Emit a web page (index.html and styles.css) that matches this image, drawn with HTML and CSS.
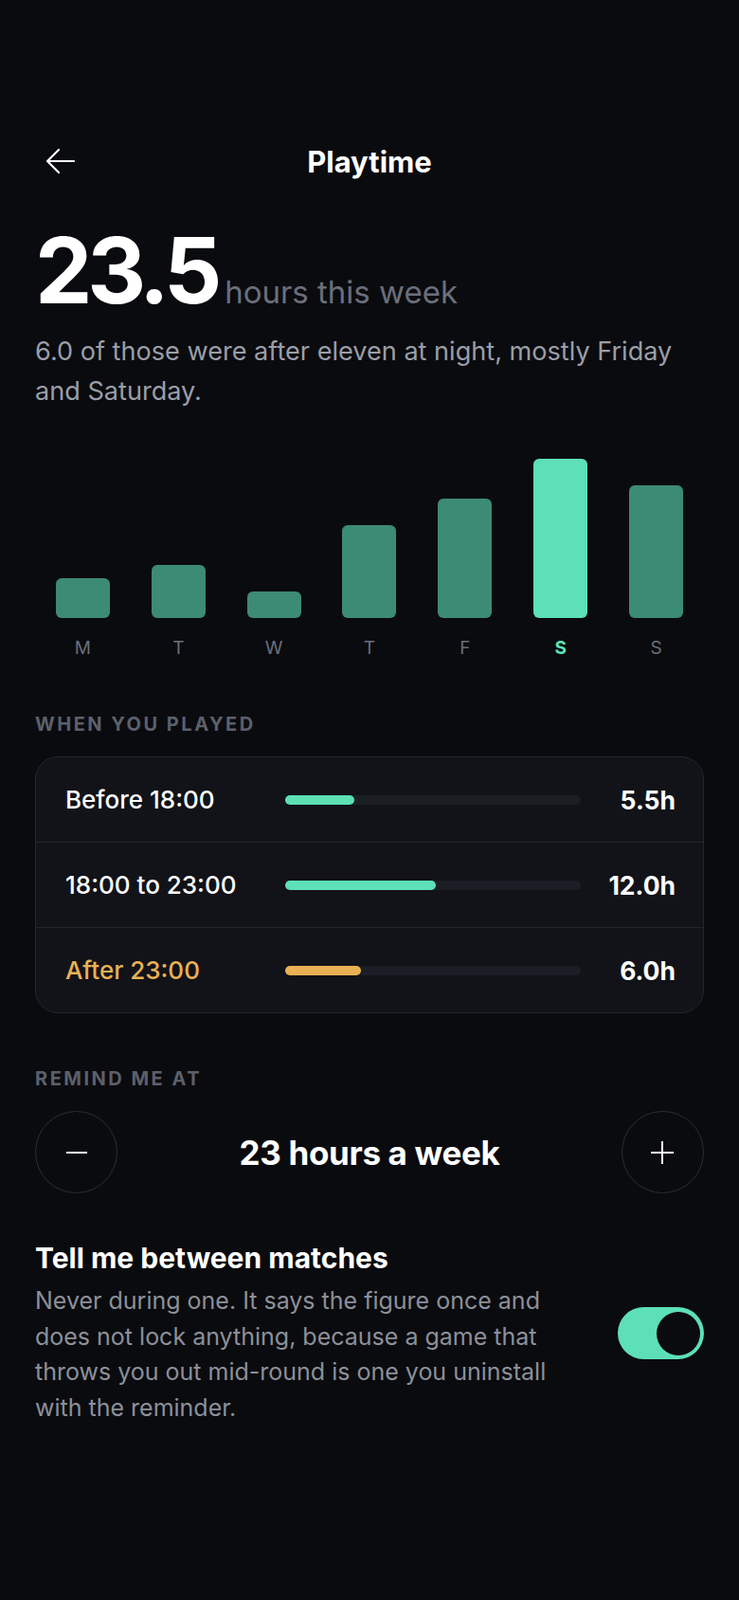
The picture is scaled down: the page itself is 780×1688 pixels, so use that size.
FILE: index.html
```html
<!DOCTYPE html>
<html lang="en">
<head>
    <meta charset="UTF-8">
    <meta name="viewport" content="width=device-width, initial-scale=1.0">
    <title>Playtime</title>
    <link rel="stylesheet" href="styles.css">
</head>
<body>
    <div id="screen">
        <header class="top-bar">
            <a href="#" class="back-button" aria-label="Back">
                <svg width="32" height="28" viewBox="0 0 32 28" fill="none" stroke="#ffffff" stroke-width="2.2" stroke-linecap="round" stroke-linejoin="round">
                    <path d="M30 14H3"/>
                    <path d="M14 2L2 14l12 12"/>
                </svg>
            </a>
            <h1 class="page-title">Playtime</h1>
            <span></span>
        </header>

        <div class="hero">
            <span class="hero-number">23.5</span>
            <span class="hero-unit">hours this week</span>
        </div>
        <p class="hero-note">6.0 of those were after eleven at night, mostly Friday and Saturday.</p>

        <div class="week-chart">
            <div class="day"><div class="bar-slot"><div class="bar" style="height: 42px"></div></div><span class="day-label">M</span></div>
            <div class="day"><div class="bar-slot"><div class="bar" style="height: 56px"></div></div><span class="day-label">T</span></div>
            <div class="day"><div class="bar-slot"><div class="bar" style="height: 28px"></div></div><span class="day-label">W</span></div>
            <div class="day"><div class="bar-slot"><div class="bar" style="height: 98px"></div></div><span class="day-label">T</span></div>
            <div class="day"><div class="bar-slot"><div class="bar" style="height: 126px"></div></div><span class="day-label">F</span></div>
            <div class="day today"><div class="bar-slot"><div class="bar" style="height: 168px"></div></div><span class="day-label">S</span></div>
            <div class="day"><div class="bar-slot"><div class="bar" style="height: 140px"></div></div><span class="day-label">S</span></div>
        </div>

        <h2 class="section-label">When you played</h2>
        <div class="time-card">
            <div class="time-row">
                <span class="time-name">Before 18:00</span>
                <div class="track"><div class="fill" style="width: 23.4%"></div></div>
                <span class="time-value">5.5h</span>
            </div>
            <div class="time-row">
                <span class="time-name">18:00 to 23:00</span>
                <div class="track"><div class="fill" style="width: 51.1%"></div></div>
                <span class="time-value">12.0h</span>
            </div>
            <div class="time-row late">
                <span class="time-name">After 23:00</span>
                <div class="track"><div class="fill" style="width: 25.5%"></div></div>
                <span class="time-value">6.0h</span>
            </div>
        </div>

        <h2 class="section-label remind-label">Remind me at</h2>
        <div class="stepper">
            <button class="step-button" aria-label="Less">
                <svg width="26" height="26" viewBox="0 0 26 26" stroke="#ffffff" stroke-width="2"><path d="M2 13h22"/></svg>
            </button>
            <div class="step-value">23 hours a week</div>
            <button class="step-button" aria-label="More">
                <svg width="26" height="26" viewBox="0 0 26 26" stroke="#ffffff" stroke-width="2"><path d="M1 13h24M13 1v24"/></svg>
            </button>
        </div>

        <div class="setting">
            <div class="setting-text">
                <div class="setting-title">Tell me between matches</div>
                <p class="setting-note">Never during one. It says the figure once and does not lock anything, because a game that throws you out mid-round is one you uninstall with the reminder.</p>
            </div>
            <div class="toggle on"><div class="knob"></div></div>
        </div>
    </div>
</body>
</html>
```

FILE: styles.css
```css
body {
    margin: 0;
    background-color: #0a0b0e;
    color: #ffffff;
    font-family: Inter, "Noto Sans", sans-serif;
}
#screen {
    padding: 142px 37px 0 37px;
}
.top-bar {
    display: grid;
    grid-template-columns: 60px 1fr 60px;
    align-items: center;
    height: 56px;
}
.back-button {
    display: flex;
    align-items: center;
    padding-left: 11px;
}
.page-title {
    margin: 0;
    text-align: center;
    font-size: 31px;
    font-weight: 700;
}
.hero {
    display: flex;
    align-items: baseline;
    gap: 8px;
    margin-top: 37px;
}
.hero-number {
    font-size: 96px;
    line-height: 100px;
    font-weight: 700;
    letter-spacing: -0.055em;
}
.hero-unit {
    font-size: 33px;
    color: #6b6f7b;
}
.hero-note {
    margin: 15px 0 0 0;
    font-size: 27.1px;
    line-height: 42px;
    color: #9a9ea8;
}
.week-chart {
    display: grid;
    grid-template-columns: repeat(7, 1fr);
    margin-top: 50px;
}
.day {
    display: flex;
    flex-direction: column;
    align-items: center;
    gap: 21px;
}
.bar-slot {
    height: 168px;
    width: 57px;
    display: flex;
    align-items: flex-end;
}
.bar {
    width: 100%;
    border-radius: 6px;
    background-color: #3c8b73;
}
.day-label {
    font-size: 19px;
    line-height: 22px;
    color: #6b6f7b;
}
.today .bar {
    background-color: #5de0b6;
}
.today .day-label {
    color: #5de0b6;
    font-weight: 700;
}
.section-label {
    margin: 58px 0 0 0;
    font-size: 20px;
    line-height: 22px;
    font-weight: 700;
    letter-spacing: 0.125em;
    text-transform: uppercase;
    color: #5c606b;
}
.time-card {
    margin-top: 23px;
    background-color: #111318;
    border: 1.5px solid #23262d;
    border-radius: 24px;
    overflow: hidden;
}
.time-row {
    display: grid;
    grid-template-columns: 232px 1fr 100px;
    align-items: center;
    height: 89px;
    padding: 0 29px 0 31px;
}
.time-row + .time-row {
    border-top: 1.5px solid #23262d;
}
.time-name {
    font-size: 26px;
    font-weight: 500;
}
.late .time-name {
    color: #eab154;
}
.track {
    height: 10px;
    border-radius: 5px;
    background-color: #1b1e25;
}
.fill {
    height: 100%;
    border-radius: 5px;
    background-color: #5de0b6;
}
.late .fill {
    background-color: #eab154;
}
.time-value {
    text-align: right;
    font-size: 26.5px;
    font-weight: 700;
}
.remind-label {
    margin-top: 58px;
}
.stepper {
    display: flex;
    align-items: center;
    justify-content: space-between;
    margin-top: 23px;
}
.step-button {
    width: 87px;
    height: 87px;
    border-radius: 50%;
    border: 1.5px solid #2a2d35;
    background: none;
    display: flex;
    align-items: center;
    justify-content: center;
    padding: 0;
}
.step-value {
    font-size: 35px;
    font-weight: 700;
    letter-spacing: -0.01em;
}
.setting {
    display: flex;
    align-items: center;
    justify-content: space-between;
    margin-top: 50px;
}
.setting-text {
    max-width: 560px;
}
.setting-title {
    font-size: 30px;
    line-height: 36px;
    font-weight: 700;
}
.setting-note {
    margin: 9px 0 0 0;
    font-size: 25px;
    line-height: 37.7px;
    color: #8c909a;
}
.toggle {
    width: 91px;
    height: 55px;
    border-radius: 28px;
    background-color: #5de0b6;
    display: flex;
    align-items: center;
    justify-content: flex-end;
    padding: 0 4px;
    box-sizing: border-box;
}
.knob {
    width: 46px;
    height: 46px;
    border-radius: 50%;
    background-color: #0a0b0e;
}
```
